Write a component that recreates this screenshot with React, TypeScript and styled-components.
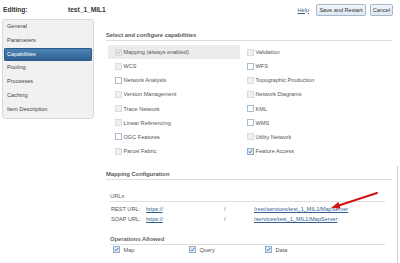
import * as React from 'react'
import styled, { createGlobalStyle, css } from 'styled-components'

const GlobalStyle = createGlobalStyle`
  body {
    margin: 0;
    font-family: 'Liberation Sans', Arial, sans-serif;
    font-size: 5.6px;
    color: #555;
    background: #fff;
  }
`

const Page = styled.div`
  position: relative;
  width: 400px;
  height: 263px;
  overflow: hidden;
`

const Header = styled.div`
  display: flex;
  align-items: center;
  height: 19px;
  padding: 0 7px 0 3px;
  box-sizing: border-box;
`

const Title = styled.span<{ $width?: number }>`
  font-size: 6.6px;
  font-weight: bold;
  color: #333;
  width: ${p => (p.$width ? `${p.$width}px` : 'auto')};
`

const Spacer = styled.div`
  flex: 1;
`

const HelpLink = styled.a`
  color: #3a5f8a;
  text-decoration: underline;
  margin-right: 7px;
`

const Button = styled.button<{ $width: number }>`
  height: 12px;
  width: ${p => p.$width}px;
  padding: 0;
  margin-left: 4px;
  border: 1px solid #a7b8cc;
  border-radius: 2px;
  background: linear-gradient(#f4f7fb, #dfe7f1);
  font-family: 'Liberation Sans', Arial, sans-serif;
  font-size: 5.6px;
  color: #333;
  &:first-of-type {
    margin-left: 0;
  }
`

const Body = styled.div`
  display: flex;
  align-items: flex-start;
`

const Nav = styled.div`
  margin-left: 2px;
  width: 92px;
  box-sizing: border-box;
  background: #f1f1f1;
  border: 1px solid #d9d9d9;
  border-radius: 3px;
  padding-bottom: 1px;
`

const NavItem = styled.div<{ $active?: boolean }>`
  height: 13.8px;
  line-height: 13.8px;
  padding-left: 4px;
  color: #444;
  ${p =>
    p.$active &&
    css`
      margin: 0 1px;
      padding-left: 3px;
      color: #fff;
      border-radius: 2px;
      background: linear-gradient(#4c86b8, #2b5f8e);
      box-shadow: inset 0 0 0 1px #2a5a85;
    `}
`

const Main = styled.div`
  margin-left: 12px;
  width: 286px;
`

const SectionHeading = styled.div<{ $top: number }>`
  margin-top: ${p => p.$top}px;
  line-height: 7px;
  font-size: 5.8px;
  font-weight: bold;
  color: #5a5a5a;
  padding-bottom: 1px;
  border-bottom: 1px solid #dedede;
`

const CapGrid = styled.div`
  display: grid;
  grid-template-columns: 132px 132px;
  grid-auto-rows: 14.15px;
  margin: 4px 0 0 2px;
`

const Cell = styled.div<{ $shaded?: boolean }>`
  display: flex;
  align-items: center;
  gap: 1.5px;
  padding-left: 7px;
  color: #555;
  background: ${p => (p.$shaded ? '#ececec' : 'transparent')};
`

type BoxState = 'off' | 'on' | 'lockedOn' | 'checked'

const Box = styled.span<{ $state: BoxState }>`
  display: inline-flex;
  align-items: center;
  justify-content: center;
  width: 7px;
  height: 7px;
  box-sizing: border-box;
  flex: none;
  border: 1px solid;
  ${p => {
    switch (p.$state) {
      case 'on':
        return css`background: #fff; border-color: #a9bdd2;`
      case 'checked':
        return css`background: #dce8f4; border-color: #93adc8;`
      case 'lockedOn':
        return css`background: #eaeaea; border-color: #d6d6d6;`
      default:
        return css`background: #f0f0f0; border-color: #dcdcdc;`
    }
  }}
`

const Checkbox = ({ state }: { state: BoxState }) => (
  <Box $state={state}>
    {(state === 'checked' || state === 'lockedOn') && (
      <svg width="5" height="5" viewBox="0 0 5 5">
        <path
          d="M0.8 2.6 L2 3.8 L4.2 1.1"
          fill="none"
          stroke={state === 'checked' ? '#3d6f9e' : '#aaa'}
          strokeWidth="0.9"
        />
      </svg>
    )}
  </Box>
)

const ConfigSection = styled.div`
  position: relative;
  &::after {
    content: '';
    position: absolute;
    right: -6px;
    top: -5px;
    bottom: -40px;
    width: 1px;
    background: #cfcfcf;
  }
`

const Inner = styled.div`
  margin-left: 4px;
  width: 275px;
`

const SubHeading = styled.div<{ $top: number; $bold?: boolean }>`
  margin-top: ${p => p.$top}px;
  line-height: 7px;
  font-size: 5.8px;
  font-weight: ${p => (p.$bold ? 'bold' : 'normal')};
  color: #666;
  padding-bottom: 1px;
  border-bottom: 1px solid #dedede;
`

const UrlTable = styled.div`
  display: grid;
  grid-template-columns: 35px 78px 30px 1fr;
  grid-auto-rows: 10px;
  align-items: center;
  margin-top: 2.5px;
  padding-left: 1px;
`

const UrlLink = styled.a`
  color: #2f5f93;
  text-decoration: underline;
  white-space: nowrap;
`

const Slash = styled.span`
  color: #555;
`

const OpsRow = styled.div`
  display: grid;
  grid-template-columns: 76px 76px 76px;
  height: 9px;
  align-items: center;
  padding-left: 3px;
`

const OpItem = styled.div`
  display: flex;
  align-items: center;
  gap: 3.5px;
  color: #555;
`

const Arrow = styled.svg`
  position: absolute;
  left: 328px;
  top: 189px;
`

const capabilities: [string, BoxState, boolean?][] = [
  ['Mapping (always enabled)', 'lockedOn', true],
  ['Validation', 'off'],
  ['WCS', 'off'],
  ['WFS', 'on'],
  ['Network Analysis', 'on'],
  ['Topographic Production', 'off'],
  ['Version Management', 'off'],
  ['Network Diagrams', 'off'],
  ['Trace Network', 'off'],
  ['KML', 'on'],
  ['Linear Referencing', 'off'],
  ['WMS', 'on'],
  ['OGC Features', 'on'],
  ['Utility Network', 'off'],
  ['Parcel Fabric', 'off'],
  ['Feature Access', 'checked'],
]

const navItems = ['General', 'Parameters', 'Capabilities', 'Pooling', 'Processes', 'Caching', 'Item Description']

export default function App() {
  return (
    <Page>
      <GlobalStyle />
      <Header>
        <Title $width={65}>Editing:</Title>
        <Title>test_1_MIL1</Title>
        <Spacer />
        <HelpLink>Help</HelpLink>
        <Button $width={50}>Save and Restart</Button>
        <Button $width={23}>Cancel</Button>
      </Header>
      <Body>
        <Nav>
          {navItems.map(item => (
            <NavItem key={item} $active={item === 'Capabilities'}>
              {item}
            </NavItem>
          ))}
        </Nav>
        <Main>
          <SectionHeading $top={13}>Select and configure capabilities</SectionHeading>
          <CapGrid>
            {capabilities.map(([label, state, shaded]) => (
              <Cell key={label} $shaded={shaded}>
                <Checkbox state={state} />
                {label}
              </Cell>
            ))}
          </CapGrid>
          <ConfigSection>
            <SectionHeading $top={13.3}>Mapping Configuration</SectionHeading>
            <Inner>
              <SubHeading $top={12.5}>URLs</SubHeading>
              <UrlTable>
                <span>REST URL:</span>
                <UrlLink>https://</UrlLink>
                <Slash>/</Slash>
                <UrlLink>/rest/services/test_1_MIL1/MapServer</UrlLink>
                <span>SOAP URL:</span>
                <UrlLink>https://</UrlLink>
                <Slash>/</Slash>
                <UrlLink>/services/test_1_MIL1/MapServer</UrlLink>
              </UrlTable>
              <SubHeading $top={12} $bold>Operations Allowed</SubHeading>
              <OpsRow>
                <OpItem><Checkbox state="checked" />Map</OpItem>
                <OpItem><Checkbox state="checked" />Query</OpItem>
                <OpItem><Checkbox state="checked" />Data</OpItem>
              </OpsRow>
            </Inner>
          </ConfigSection>
        </Main>
      </Body>
      <Arrow width="52" height="22" viewBox="0 0 52 22">
        <line x1="49" y1="4" x2="11.5" y2="16.2" stroke="#d21414" strokeWidth="2" strokeLinecap="round" />
        <polygon points="3,19 12.6,19.6 10.5,12.9" fill="#d21414" />
      </Arrow>
    </Page>
  )
}
